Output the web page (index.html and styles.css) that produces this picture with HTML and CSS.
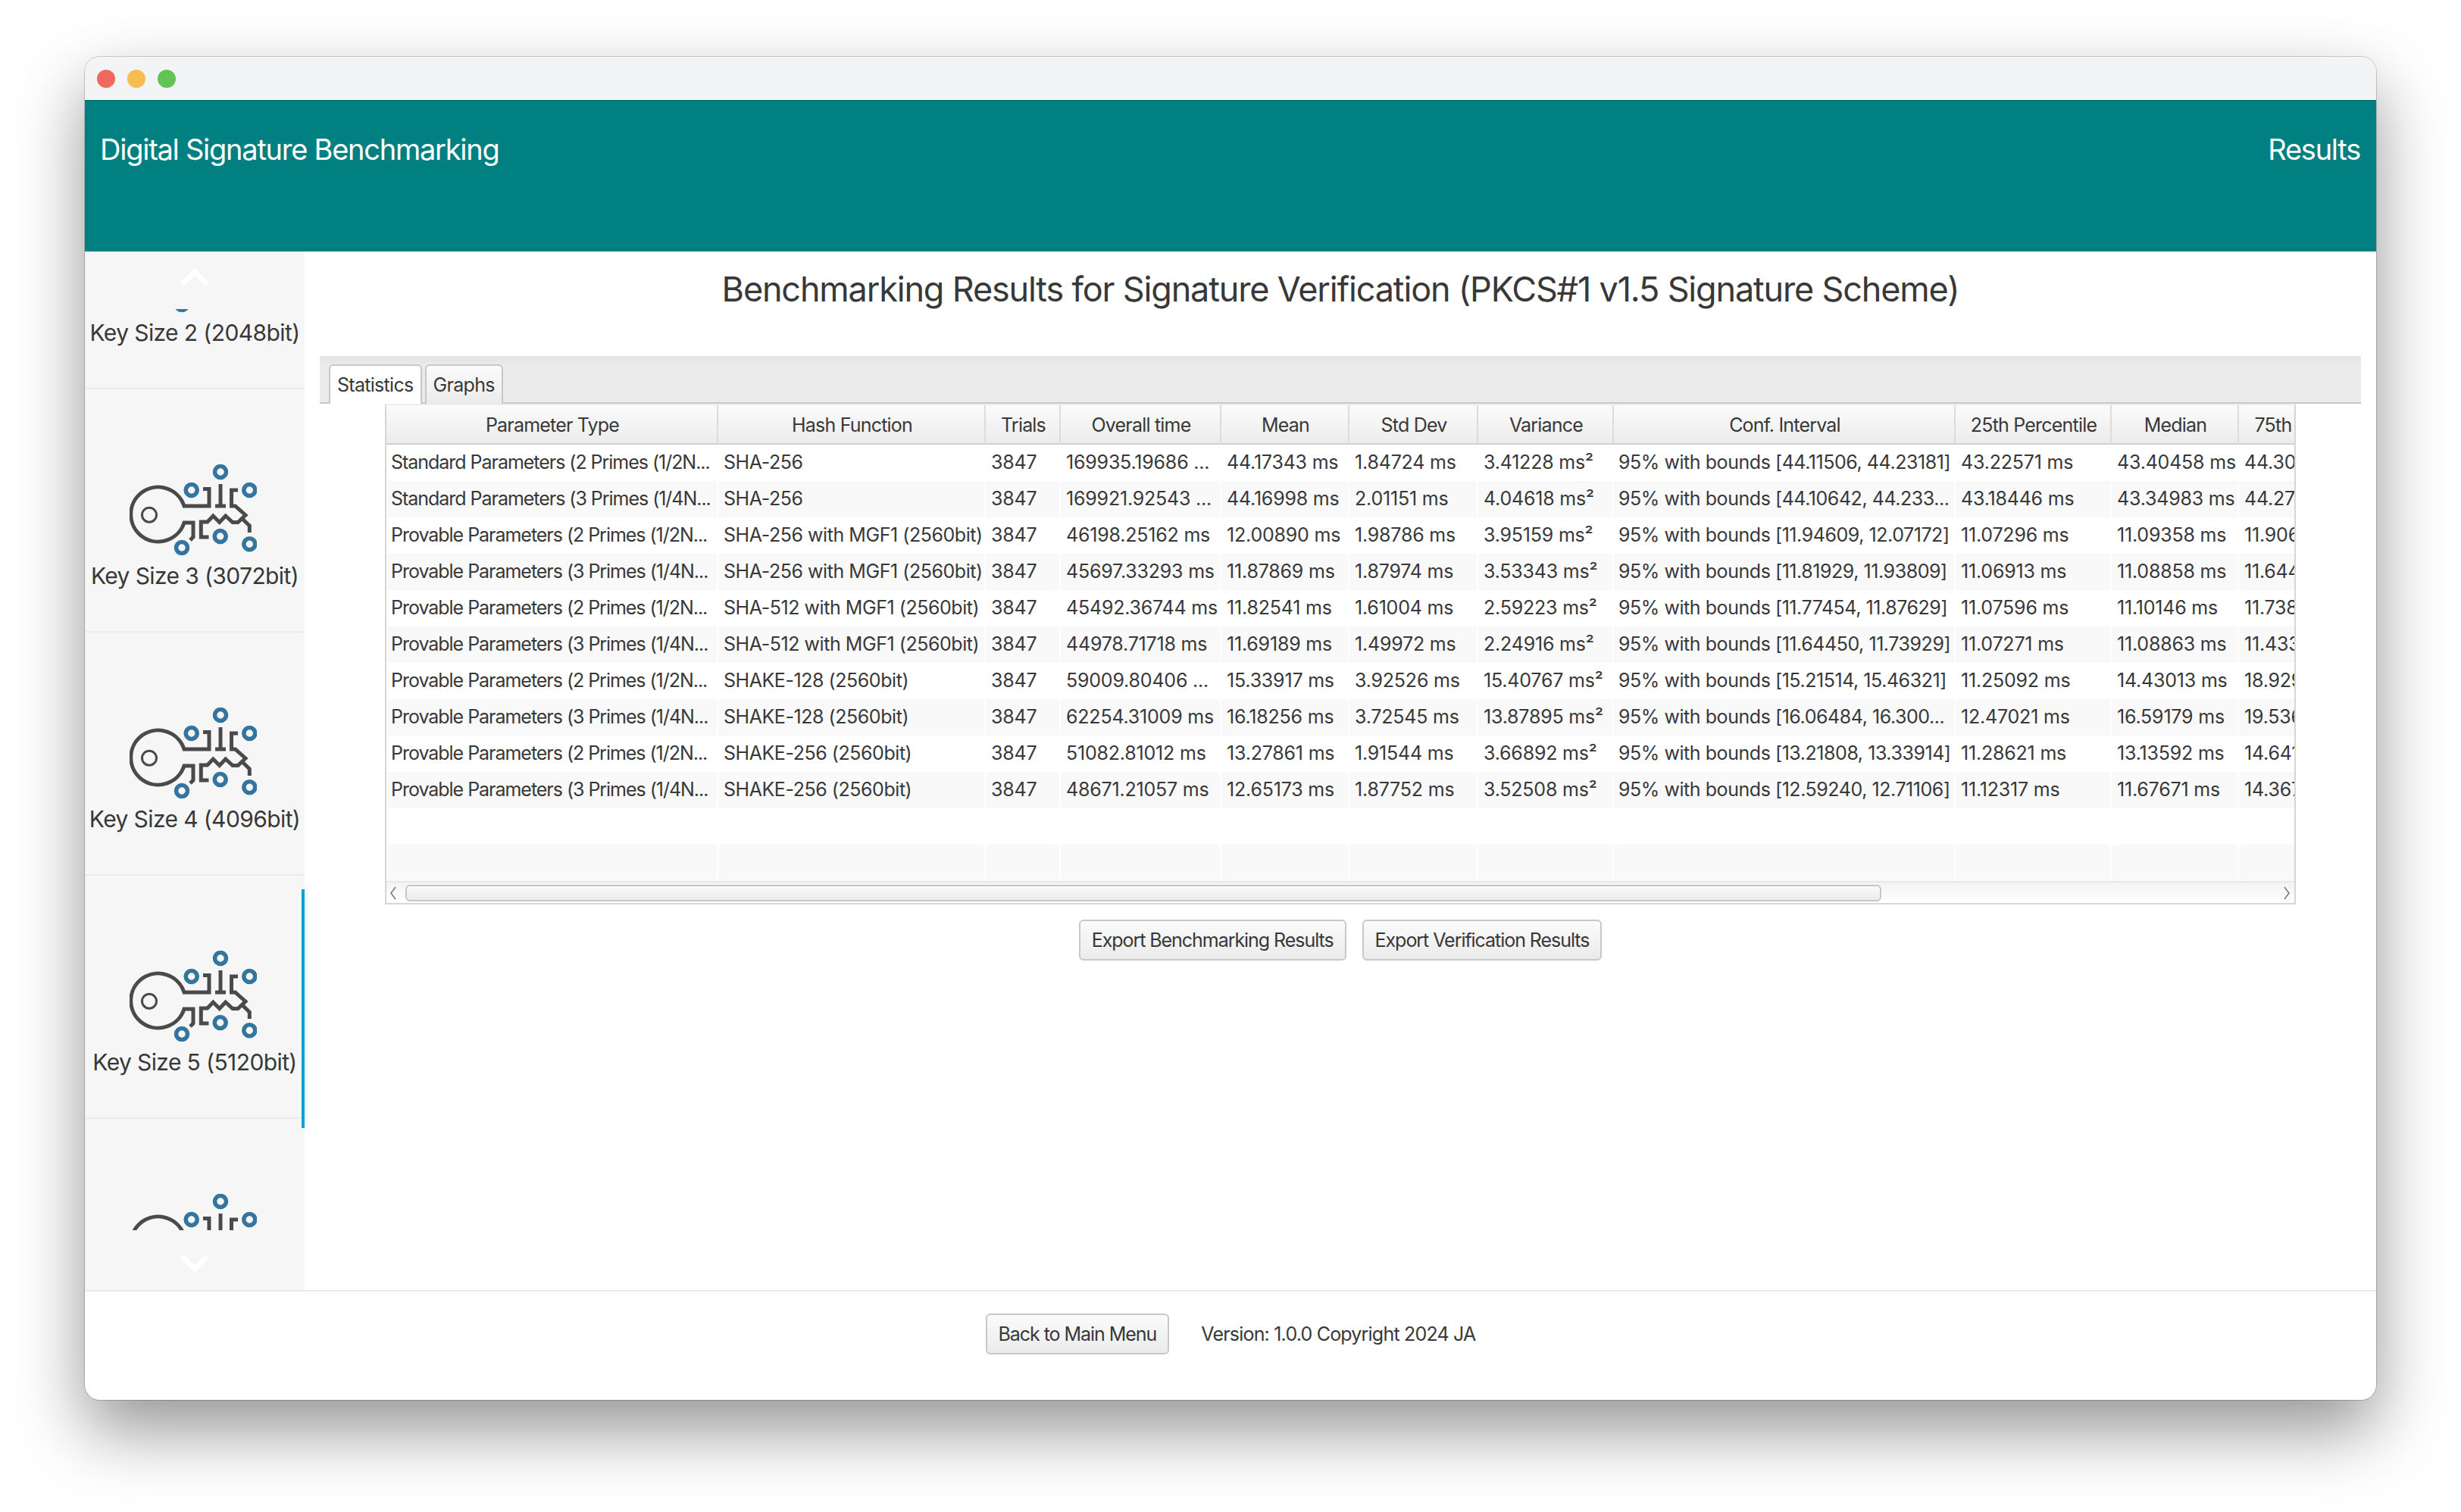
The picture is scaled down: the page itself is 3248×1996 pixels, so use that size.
FILE: index.html
```html
<!DOCTYPE html>
<html lang="en">
<head>
  <meta charset="UTF-8" />
  <title>Digital Signature Benchmarking</title>
  <link rel="stylesheet" href="styles.css">
</head>
<body>

  <svg class="defs" width="0" height="0">
    <symbol id="key" viewBox="0 0 168 120">
      <g fill="none" stroke="#4a4a4a" stroke-width="5">
        <path d="M72 55 A36 36 0 1 0 72 77 H84 V96 L80 100" />
        <path d="M70 55 H105 V32.5 H97" />
        <path d="M120 26 V55 M113 55 H127" />
        <path d="M143 34 H134.5 V55 H139.5 L153 67 L143 76.5 H136 L126.7 68 L118.7 76.5 L110.3 68 L102.7 76 H94.3 V96 H104.5" />
        <path d="M149 72 L158.3 81 V90" />
        <circle cx="26" cy="66.7" r="9.5" stroke-width="3" />
      </g>
      <g fill="none" stroke="#34759f" stroke-width="5.6">
        <circle cx="120" cy="10" r="7.5" />
        <circle cx="81.7" cy="34" r="7.5" />
        <circle cx="158.3" cy="34" r="7.5" />
        <circle cx="119.7" cy="95" r="7.5" />
        <circle cx="158.3" cy="105.3" r="7.5" />
        <circle cx="69" cy="110" r="7.5" />
      </g>
    </symbol>
  </svg>

  <div class="window">
    <div class="titlebar">
      <span class="light red"></span>
      <span class="light yellow"></span>
      <span class="light green"></span>
    </div>

    <div class="banner">
      <span>Digital Signature Benchmarking</span>
      <span>Results</span>
    </div>

    <div class="body">
      <div class="sidebar">
        <div class="scroll-btn up">
          <svg width="36" height="24" viewBox="0 0 36 24"><path d="M4 19 L18 5 L32 19" fill="none" stroke="#fff" stroke-width="7" stroke-linecap="round" stroke-linejoin="round" /></svg>
        </div>
        <div class="list-view">
          <div class="list">
            <div class="item">
              <svg class="key-icon"><use href="#key" /></svg>
              <div class="item-label">Key Size 2 (2048bit)</div>
            </div>
            <div class="item">
              <svg class="key-icon"><use href="#key" /></svg>
              <div class="item-label">Key Size 3 (3072bit)</div>
            </div>
            <div class="item">
              <svg class="key-icon"><use href="#key" /></svg>
              <div class="item-label">Key Size 4 (4096bit)</div>
            </div>
            <div class="item selected">
              <svg class="key-icon"><use href="#key" /></svg>
              <div class="item-label">Key Size 5 (5120bit)</div>
            </div>
            <div class="item">
              <svg class="key-icon"><use href="#key" /></svg>
              <div class="item-label">Key Size 6 (6144bit)</div>
            </div>
          </div>
        </div>
        <div class="scroll-btn down">
          <svg width="36" height="24" viewBox="0 0 36 24"><path d="M4 5 L18 19 L32 5" fill="none" stroke="#fff" stroke-width="7" stroke-linecap="round" stroke-linejoin="round" /></svg>
        </div>
      </div>

      <div class="main">
        <h1 class="title">Benchmarking Results for Signature Verification (PKCS#1 v1.5 Signature Scheme)</h1>

        <div class="tab-bar">
          <div class="tab active">Statistics</div>
          <div class="tab">Graphs</div>
        </div>

        <div class="table-box">
          <div class="table-clip">
            <table class="stats">
              <colgroup>
                <col class="c-type"><col class="c-hash"><col class="c-trials"><col class="c-time">
                <col class="c-mean"><col class="c-dev"><col class="c-var"><col class="c-conf">
                <col class="c-p25"><col class="c-med"><col class="c-p75">
              </colgroup>
              <thead>
                <tr>
                  <th>Parameter Type</th><th>Hash Function</th><th>Trials</th><th>Overall time</th><th>Mean</th><th>Std Dev</th><th>Variance</th><th>Conf. Interval</th><th>25th Percentile</th><th>Median</th><th>75th Percentile</th>
                </tr>
              </thead>
              <tbody>
                <tr><td>Standard Parameters (2 Primes (1/2N...</td><td>SHA-256</td><td>3847</td><td>169935.19686 ...</td><td>44.17343 ms</td><td>1.84724 ms</td><td>3.41228 ms²</td><td>95% with bounds [44.11506, 44.23181]</td><td>43.22571 ms</td><td>43.40458 ms</td><td>44.30512 ms</td></tr>
                <tr><td>Standard Parameters (3 Primes (1/4N...</td><td>SHA-256</td><td>3847</td><td>169921.92543 ...</td><td>44.16998 ms</td><td>2.01151 ms</td><td>4.04618 ms²</td><td>95% with bounds [44.10642, 44.233...</td><td>43.18446 ms</td><td>43.34983 ms</td><td>44.27106 ms</td></tr>
                <tr><td>Provable Parameters (2 Primes (1/2N...</td><td>SHA-256 with MGF1 (2560bit)</td><td>3847</td><td>46198.25162 ms</td><td>12.00890 ms</td><td>1.98786 ms</td><td>3.95159 ms²</td><td>95% with bounds [11.94609, 12.07172]</td><td>11.07296 ms</td><td>11.09358 ms</td><td>11.90642 ms</td></tr>
                <tr><td>Provable Parameters (3 Primes (1/4N...</td><td>SHA-256 with MGF1 (2560bit)</td><td>3847</td><td>45697.33293 ms</td><td>11.87869 ms</td><td>1.87974 ms</td><td>3.53343 ms²</td><td>95% with bounds [11.81929, 11.93809]</td><td>11.06913 ms</td><td>11.08858 ms</td><td>11.64418 ms</td></tr>
                <tr><td>Provable Parameters (2 Primes (1/2N...</td><td>SHA-512 with MGF1 (2560bit)</td><td>3847</td><td>45492.36744 ms</td><td>11.82541 ms</td><td>1.61004 ms</td><td>2.59223 ms²</td><td>95% with bounds [11.77454, 11.87629]</td><td>11.07596 ms</td><td>11.10146 ms</td><td>11.73812 ms</td></tr>
                <tr><td>Provable Parameters (3 Primes (1/4N...</td><td>SHA-512 with MGF1 (2560bit)</td><td>3847</td><td>44978.71718 ms</td><td>11.69189 ms</td><td>1.49972 ms</td><td>2.24916 ms²</td><td>95% with bounds [11.64450, 11.73929]</td><td>11.07271 ms</td><td>11.08863 ms</td><td>11.43320 ms</td></tr>
                <tr><td>Provable Parameters (2 Primes (1/2N...</td><td>SHAKE-128 (2560bit)</td><td>3847</td><td>59009.80406 ...</td><td>15.33917 ms</td><td>3.92526 ms</td><td>15.40767 ms²</td><td>95% with bounds [15.21514, 15.46321]</td><td>11.25092 ms</td><td>14.43013 ms</td><td>18.92944 ms</td></tr>
                <tr><td>Provable Parameters (3 Primes (1/4N...</td><td>SHAKE-128 (2560bit)</td><td>3847</td><td>62254.31009 ms</td><td>16.18256 ms</td><td>3.72545 ms</td><td>13.87895 ms²</td><td>95% with bounds [16.06484, 16.300...</td><td>12.47021 ms</td><td>16.59179 ms</td><td>19.53642 ms</td></tr>
                <tr><td>Provable Parameters (2 Primes (1/2N...</td><td>SHAKE-256 (2560bit)</td><td>3847</td><td>51082.81012 ms</td><td>13.27861 ms</td><td>1.91544 ms</td><td>3.66892 ms²</td><td>95% with bounds [13.21808, 13.33914]</td><td>11.28621 ms</td><td>13.13592 ms</td><td>14.64118 ms</td></tr>
                <tr><td>Provable Parameters (3 Primes (1/4N...</td><td>SHAKE-256 (2560bit)</td><td>3847</td><td>48671.21057 ms</td><td>12.65173 ms</td><td>1.87752 ms</td><td>3.52508 ms²</td><td>95% with bounds [12.59240, 12.71106]</td><td>11.12317 ms</td><td>11.67671 ms</td><td>14.36722 ms</td></tr>
                <tr><td></td><td></td><td></td><td></td><td></td><td></td><td></td><td></td><td></td><td></td><td></td></tr>
                <tr><td></td><td></td><td></td><td></td><td></td><td></td><td></td><td></td><td></td><td></td><td></td></tr>
              </tbody>
            </table>
          </div>
          <div class="hscroll">
            <svg class="arrow" width="12" height="20" viewBox="0 0 12 20"><path d="M9 2 L3 10 L9 18" /></svg>
            <div class="thumb"></div>
            <svg class="arrow" width="12" height="20" viewBox="0 0 12 20"><path d="M3 2 L9 10 L3 18" /></svg>
          </div>
        </div>

        <div class="actions">
          <button>Export Benchmarking Results</button>
          <button>Export Verification Results</button>
        </div>
      </div>
    </div>

    <div class="footer">
      <button>Back to Main Menu</button>
      <span class="version">Version: 1.0.0 Copyright 2024 JA</span>
    </div>
  </div>

</body>
</html>
```

FILE: styles.css
```css
* {
  box-sizing: border-box;
  margin: 0;
  padding: 0;
}
html, body {
  height: 1996px;
  overflow: hidden;
}
body {
  font-family: Inter, 'Noto Sans', sans-serif;
  background: #fff;
  color: #383838;
  padding: 75px 112px 0;
}
.defs {
  display: block;
  height: 0;
}
.window {
  width: 3024px;
  height: 1773px;
  background: #fff;
  border-radius: 20px;
  overflow: hidden;
  display: flex;
  flex-direction: column;
  box-shadow: 0 0 0 1px rgba(0, 0, 0, 0.18), 0 40px 90px rgba(0, 0, 0, 0.42);
}
.titlebar {
  height: 57px;
  flex: none;
  background: #f3f4f6;
  display: flex;
  align-items: center;
  gap: 16px;
  padding-left: 16px;
}
.light {
  width: 24px;
  height: 24px;
  border-radius: 50%;
}
.red { background: #ee6a5e; }
.yellow { background: #f5bd4f; }
.green { background: #61c454; }
.banner {
  height: 200px;
  flex: none;
  background: #008080;
  border-top: 1px solid #006a6a;
  color: #fff;
  font-size: 38px;
  letter-spacing: -1.25px;
  display: flex;
  justify-content: space-between;
  padding: 41px 21px 0 20px;
}
.body {
  flex: 1;
  display: flex;
  min-height: 0;
}
.sidebar {
  width: 290px;
  flex: none;
  background: #f6f6f6;
  display: flex;
  flex-direction: column;
}
.scroll-btn {
  flex: none;
  display: flex;
  justify-content: center;
}
.scroll-btn.up {
  height: 76px;
  padding-top: 22px;
}
.scroll-btn.down {
  height: 79px;
  padding-top: 32px;
}
.list-view {
  flex: 1;
  overflow: hidden;
  min-height: 0;
}
.list {
  margin-top: -215px;
}
.item {
  position: relative;
  height: 321px;
  padding-top: 99px;
  border-bottom: 2px solid #ebebeb;
  text-align: center;
}
.item.selected::after {
  content: "";
  position: absolute;
  right: 0;
  top: 18px;
  width: 4px;
  height: 315px;
  background: #00a2d6;
  z-index: 1;
}
.key-icon {
  display: block;
  width: 168px;
  height: 120px;
  margin-left: 59px;
}
.item-label {
  font-size: 30px;
  letter-spacing: -0.6px;
  line-height: 54px;
  white-space: nowrap;
}
.main {
  flex: 1;
  min-width: 0;
  display: flex;
  flex-direction: column;
}
.title {
  height: 100px;
  line-height: 100px;
  margin-bottom: 38px;
  font-size: 45px;
  font-weight: 400;
  letter-spacing: -1.17px;
  text-align: center;
}
.tab-bar {
  height: 63px;
  margin: 0 20px;
  flex: none;
  display: flex;
  align-items: flex-end;
  gap: 4px;
  padding-left: 12px;
  background: linear-gradient(#e3e3e3, #ebebeb 20%);
  border-bottom: 2px solid #c8c8c8;
}
.tab {
  height: 52px;
  padding: 0 9px;
  margin-bottom: -2px;
  border: 2px solid #c8c8c8;
  border-bottom: none;
  border-radius: 6px 6px 0 0;
  background: linear-gradient(#fbfbfb, #ebebeb);
  font-size: 25px;
  letter-spacing: -0.7px;
  line-height: 50px;
}
.tab.active {
  background: #fff;
  position: relative;
}
.table-box {
  margin: 0 106px;
  flex: none;
  border: 2px solid #d6d6d6;
  border-top-color: #eee;
}
.table-clip {
  overflow: hidden;
}
.stats {
  table-layout: fixed;
  border-collapse: separate;
  border-spacing: 0;
  width: 2651px;
  font-size: 25px;
  letter-spacing: -0.2px;
}
.c-type { width: 438px; }
.c-hash { width: 353px; }
.c-trials { width: 99px; }
.c-time { width: 212px; }
.c-mean { width: 169px; }
.c-dev { width: 170px; }
.c-var { width: 179px; }
.c-conf { width: 451px; }
.c-p25 { width: 206px; }
.c-med { width: 168px; }
.c-p75 { width: 206px; }
.stats th {
  height: 52px;
  padding-top: 2px;
  padding-left: 2px;
  font-weight: 400;
  letter-spacing: -0.8px;
  text-align: center;
  white-space: nowrap;
  overflow: hidden;
  background: linear-gradient(#fbfbfb, #ececec);
  border-right: 2px solid #dcdcdc;
  border-bottom: 2px solid #d0d0d0;
}
.stats td {
  height: 48px;
  padding: 0 7px 3px;
  white-space: nowrap;
  overflow: hidden;
  border-right: 2px solid #fff;
}
.stats td:nth-child(1) {
  padding-left: 6px;
  letter-spacing: -1.03px;
}
.stats td:nth-child(2) {
  letter-spacing: -0.45px;
}
.stats td:nth-child(8) {
  padding-left: 6px;
  letter-spacing: -0.45px;
}
.stats tbody tr:nth-child(even) td {
  background: #f9f9f9;
}
.hscroll {
  height: 29px;
  display: flex;
  align-items: center;
  padding: 0 4px 0 3px;
  gap: 10px;
  background: linear-gradient(#f3f3f3, #fff);
  border-top: 2px solid #e8e8e8;
}
.arrow {
  flex: none;
  fill: none;
  stroke: #777;
  stroke-width: 1.5;
}
.thumb {
  width: 1948px;
  height: 22px;
  margin-right: auto;
  border: 2px solid #c6c6c6;
  border-radius: 6px;
  background: linear-gradient(#fafafa, #ebebeb);
}
button {
  font-family: inherit;
  font-size: 25px;
  letter-spacing: -1.05px;
  color: #383838;
  height: 54px;
  padding: 0 15px;
  border: 2px solid #c8c8c8;
  border-radius: 6px;
  background: linear-gradient(#fbfbfb, #ebebeb);
}
.actions {
  margin-top: 20px;
  display: flex;
  justify-content: center;
  gap: 21px;
}
.footer {
  height: 145px;
  flex: none;
  border-top: 2px solid #ebebeb;
  padding-top: 29px;
  display: flex;
  align-items: flex-start;
  justify-content: center;
  gap: 42px;
  font-size: 25px;
  line-height: 55px;
}
.version {
  letter-spacing: -0.8px;
}
```
